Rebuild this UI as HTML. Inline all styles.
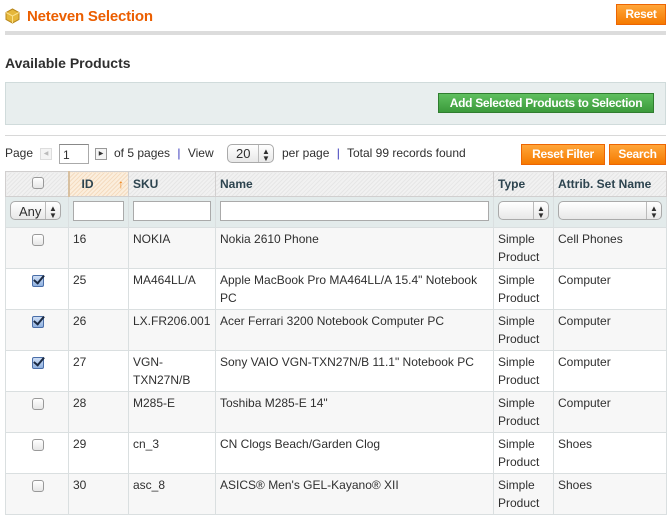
<!DOCTYPE html>
<html><head><meta charset="utf-8"><style>
*{margin:0;padding:0;box-sizing:border-box}
body{width:669px;height:515px;overflow:hidden;background:#fff;font-family:"Liberation Sans",Arial,sans-serif;font-size:12px;color:#2f2f2f;position:relative}
.a{position:absolute}
.btn{position:absolute;background:linear-gradient(#ffa63a,#f57a00);border:1px solid #ed6502;color:#fff;font-weight:bold;font-size:12px;text-align:center;line-height:19px;letter-spacing:-0.3px}
.inp{position:absolute;background:#fff;border:1px solid #aaa;border-top-color:#888}
.sel{position:absolute;border:1px solid #aaa;border-radius:5px;background:linear-gradient(#fff,#e8e8e8);font-size:13px}
.sel .ar{position:absolute;right:0;top:0;bottom:0;width:15px;border-left:1px solid #bbb;font-size:8px;line-height:7px;text-align:center;padding-top:3px}
table{position:absolute;left:5px;top:171px;width:661px;border-collapse:collapse;table-layout:fixed}
td,th{border:1px solid #dadfe0;vertical-align:top;text-align:left;padding:2px 4px 1px;line-height:18px;font-size:12px}
tr.h{height:25px}
th{background:repeating-linear-gradient(135deg,#e6e6e6 0 1px,#f1f1f1 1px 3px);font-weight:bold;color:#2d444f;padding-top:3px;border-color:#d1cfcf}
tr.f{height:31px}
tr.f td{background:#e3ebeb;padding:4px 4px 2px}
tr.r{height:41px}
tr.g td{background:#f7f7f7}
.cb{display:inline-block;width:12px;height:12px;border:1px solid #999;border-radius:3px;background:linear-gradient(#fff,#e6e6e6);margin:4px 0 0 22px}
.ck{display:inline-block;width:12px;height:12px;border:1px solid #4a6ea8;border-radius:2px;background:linear-gradient(#cfdff5,#8fb1e0);margin:4px 0 0 22px;position:relative}
.ck:after{content:"";position:absolute;left:3px;top:-3px;width:4px;height:9px;border:solid #1a2a44;border-width:0 2.5px 2.5px 0;transform:rotate(40deg)}
</style></head><body>
<svg class="a" style="left:5px;top:8px" width="15" height="16" viewBox="0 0 15 16"><path d="M7.5 1L14 4.5V11.5L7.5 15L1 11.5V4.5Z" fill="#e5b73b" stroke="#b8871b"/><path d="M1 4.5L7.5 8L14 4.5M7.5 8V15" fill="none" stroke="#fbe08a"/></svg>
<div class="a" style="left:27px;top:8px;color:#eb5e00;font-weight:bold;font-size:15px;letter-spacing:-0.2px">Neteven Selection</div>
<div class="btn" style="left:616px;top:4px;width:50px;height:21px">Reset</div>
<div class="a" style="left:5px;top:31px;width:661px;height:4px;background:#dcdcdc"></div>
<div class="a" style="left:5px;top:55px;font-weight:bold;font-size:14px;color:#2f2f2f">Available Products</div>
<div class="a" style="left:5px;top:82px;width:661px;height:43px;background:#e8eeee;border:1px solid #d0dbdb"></div>
<div class="a" style="left:438px;top:93px;width:216px;height:20px;background:linear-gradient(#5fbf5f,#3b9a3b);border:1px solid #2f7d2f;color:#fff;font-weight:bold;font-size:12px;text-align:center;line-height:18px;letter-spacing:-0.3px">Add Selected Products to Selection</div>
<div class="a" style="left:5px;top:135px;width:661px;height:1px;background:#d8d8d8"></div>
<div class="a" style="left:5px;top:146px;font-size:12px">Page</div>
<div class="a" style="left:40px;top:148px;width:12px;height:12px;border:1px solid #ddd;background:#f4f4f4;font-size:6px;color:#bbb;text-align:center;line-height:10px">◀</div>
<div class="inp" style="left:59px;top:144px;width:30px;height:20px;padding:3px 0 0 3px;font-size:12px">1</div>
<div class="a" style="left:95px;top:148px;width:12px;height:12px;border:1px solid #999;background:#f4f4f4;font-size:6px;color:#333;text-align:center;line-height:10px">▶</div>
<div class="a" style="left:114px;top:146px">of 5 pages <span style="color:#3b3bbb;margin:0 4px">|</span> View</div>
<div class="sel" style="left:227px;top:144px;width:47px;height:19px;padding:1px 0 0 8px">20<div class="ar">▲<br>▼</div></div>
<div class="a" style="left:282px;top:146px">per page <span style="color:#3b3bbb;margin:0 4px">|</span> Total 99 records found</div>
<div class="btn" style="left:521px;top:144px;width:84px;height:21px">Reset Filter</div>
<div class="btn" style="left:609px;top:144px;width:57px;height:21px">Search</div>
<table>
<colgroup><col style="width:63px"><col style="width:60px"><col style="width:87px"><col style="width:278px"><col style="width:60px"><col style="width:113px"></colgroup>
<tr class="h"><th><span class="cb" style="margin:2px 0 0 22px"></span></th><th style="background:repeating-linear-gradient(135deg,#f5dcc0 0 1px,#fbeedd 1px 3px);padding-left:12px;border-left:2px solid #d8c0a0">ID <span style="color:#ee7700;float:right;font-weight:normal">↑</span></th><th>SKU</th><th>Name</th><th>Type</th><th>Attrib. Set Name</th></tr>
<tr class="f"><td><div style="position:relative;width:51px;height:19px" class="sel"><span style="position:absolute;left:8px;top:1px">Any</span><div class="ar">▲<br>▼</div></div></td><td><div style="height:20px;border:1px solid #aaa;background:#fff"></div></td><td><div style="height:20px;border:1px solid #aaa;background:#fff"></div></td><td><div style="height:20px;border:1px solid #aaa;background:#fff"></div></td><td><div class="sel" style="position:relative;height:19px"><div class="ar">▲<br>▼</div></div></td><td><div class="sel" style="position:relative;height:19px"><div class="ar">▲<br>▼</div></div></td></tr>
<tr class="r g"><td><span class="cb"></span></td><td>16</td><td>NOKIA</td><td>Nokia 2610 Phone</td><td>Simple Product</td><td>Cell Phones</td></tr>
<tr class="r"><td><span class="ck"></span></td><td>25</td><td>MA464LL/A</td><td>Apple MacBook Pro MA464LL/A 15.4" Notebook PC</td><td>Simple Product</td><td>Computer</td></tr>
<tr class="r g"><td><span class="ck"></span></td><td>26</td><td>LX.FR206.001</td><td>Acer Ferrari 3200 Notebook Computer PC</td><td>Simple Product</td><td>Computer</td></tr>
<tr class="r"><td><span class="ck"></span></td><td>27</td><td>VGN-TXN27N/B</td><td>Sony VAIO VGN-TXN27N/B 11.1" Notebook PC</td><td>Simple Product</td><td>Computer</td></tr>
<tr class="r g"><td><span class="cb"></span></td><td>28</td><td>M285-E</td><td>Toshiba M285-E 14"</td><td>Simple Product</td><td>Computer</td></tr>
<tr class="r"><td><span class="cb"></span></td><td>29</td><td>cn_3</td><td>CN Clogs Beach/Garden Clog</td><td>Simple Product</td><td>Shoes</td></tr>
<tr class="r g"><td><span class="cb"></span></td><td>30</td><td>asc_8</td><td>ASICS® Men's GEL-Kayano® XII</td><td>Simple Product</td><td>Shoes</td></tr>
</table>
</body></html>
